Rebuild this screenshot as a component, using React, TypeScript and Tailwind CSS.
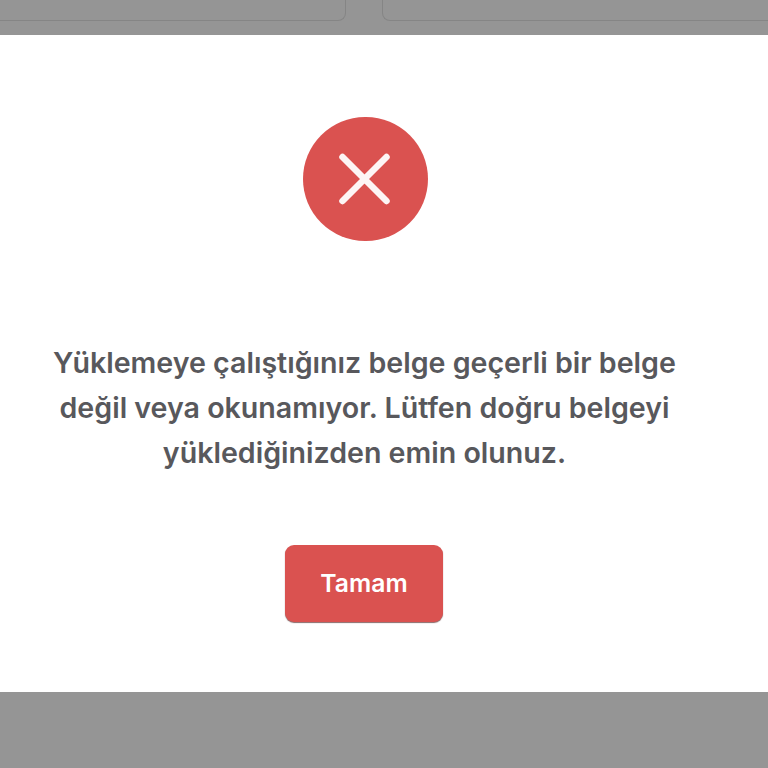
import React from 'react';

export default function App() {
  return (
    <div className="flex h-[768px] w-[768px] flex-col overflow-hidden bg-[#959595] font-['Inter',sans-serif]">
      {/* dimmed page behind the dialog */}
      <div className="flex h-[35px] shrink-0 gap-[36px]">
        <div className="h-[21px] w-[346px] rounded-br-[8px] border-b border-r border-[#858585]" />
        <div className="h-[21px] flex-1 rounded-bl-[8px] border-b border-l border-[#858585]" />
      </div>

      <div className="flex h-[657px] shrink-0 flex-col items-center bg-white pr-[39px] pt-[82px]">
        <div className="ml-[2px] flex h-[124px] w-[125px] items-center justify-center rounded-full bg-[#da5250]">
          <svg className="h-[54px] w-[54px] -translate-x-[1.5px]" viewBox="0 0 54 54" fill="none" stroke="#fdf5f5" strokeWidth={6.5} strokeLinecap="round">
            <path d="M5 5L49 49M49 5L5 49" />
          </svg>
        </div>

        <p className="mt-[99px] w-[720px] text-center text-[28.6px] leading-[45.2px] font-semibold text-[#58585c]">
          Yüklemeye çalıştığınız belge geçerli bir belge
          <br />
          değil veya okunamıyor. Lütfen doğru belgeyi
          <br />
          yüklediğinizden emin olunuz.
        </p>

        <button className="-ml-px mt-[69px] h-[77px] w-[158px] rounded-[9px] bg-[#da5250] text-[24.7px] font-semibold text-white shadow-[0_1px_1px_#8a6a6a]">
          Tamam
        </button>
      </div>
    </div>
  );
}
